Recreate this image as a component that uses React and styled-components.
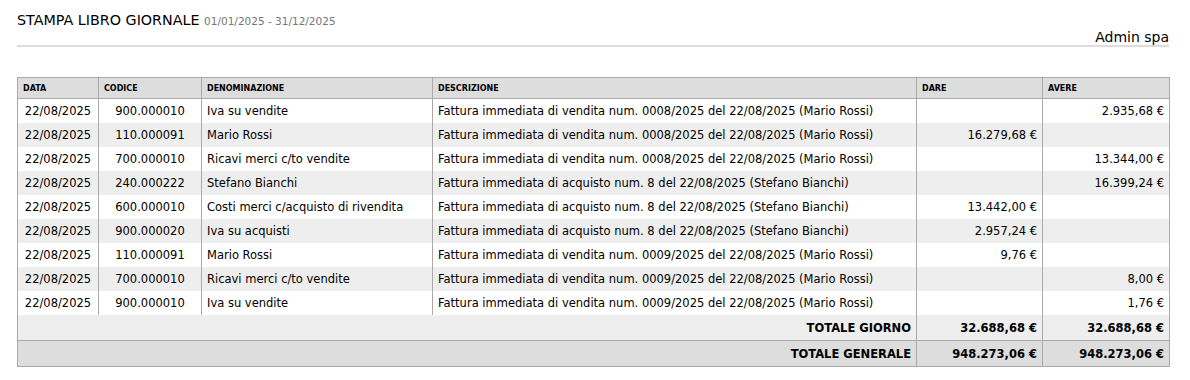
import React from 'react'
import styled, { createGlobalStyle } from 'styled-components'

const GlobalStyle = createGlobalStyle`
    body {
        margin: 0;
        background: #fff;
        font-family: "DejaVu Sans", sans-serif;
        color: #000;
    }
`

const Page = styled.div`
    padding: 11px 21px 0 17px;
`

const Header = styled.div`
    display: flex;
    justify-content: space-between;
    align-items: flex-end;
    border-bottom: 2px solid #ddd;
    margin-bottom: 30px;
`

const Title = styled.h1`
    margin: 0 0 15px 0;
    font-size: 14.3px;
    font-weight: normal;
    line-height: 18px;
    align-self: flex-start;
`

const Period = styled.small`
    font-size: 10.5px;
    color: #777;
`

const Company = styled.div`
    font-size: 14px;
    line-height: 16px;
`

const Table = styled.table`
    width: 100%;
    border-collapse: collapse;
    table-layout: fixed;
    border: 1px solid #aaa;
    font-size: 11.5px;
`

const Th = styled.th`
    background: #ddd;
    border: 1px solid #aaa;
    font-size: 8px;
    font-weight: bold;
    text-align: left;
    padding: 0 5px;
    height: 20px;
`

const Row = styled.tr`
    background: ${props => (props.striped ? '#eee' : '#fff')};
`

const Td = styled.td`
    border-left: 1px solid #aaa;
    border-right: 1px solid #aaa;
    padding: 0 5px;
    height: 24px;
    white-space: nowrap;
    text-align: ${props => props.align || 'left'};
`

const TotalRow = styled.tr`
    background: ${props => (props.grand ? '#ddd' : '#eee')};
    border-top: ${props => (props.grand ? '1px solid #aaa' : 'none')};
`

const TotalCell = styled.td`
    border-left: 1px solid #aaa;
    border-right: 1px solid #aaa;
    padding: 1px 5px 0 5px;
    height: 24px;
    font-weight: bold;
    text-align: right;
`

const rows = [
    ['22/08/2025', '900.000010', 'Iva su vendite', 'Fattura immediata di vendita num. 0008/2025 del 22/08/2025 (Mario Rossi)', '', '2.935,68 €'],
    ['22/08/2025', '110.000091', 'Mario Rossi', 'Fattura immediata di vendita num. 0008/2025 del 22/08/2025 (Mario Rossi)', '16.279,68 €', ''],
    ['22/08/2025', '700.000010', 'Ricavi merci c/to vendite', 'Fattura immediata di vendita num. 0008/2025 del 22/08/2025 (Mario Rossi)', '', '13.344,00 €'],
    ['22/08/2025', '240.000222', 'Stefano Bianchi', 'Fattura immediata di acquisto num. 8 del 22/08/2025 (Stefano Bianchi)', '', '16.399,24 €'],
    ['22/08/2025', '600.000010', 'Costi merci c/acquisto di rivendita', 'Fattura immediata di acquisto num. 8 del 22/08/2025 (Stefano Bianchi)', '13.442,00 €', ''],
    ['22/08/2025', '900.000020', 'Iva su acquisti', 'Fattura immediata di acquisto num. 8 del 22/08/2025 (Stefano Bianchi)', '2.957,24 €', ''],
    ['22/08/2025', '110.000091', 'Mario Rossi', 'Fattura immediata di vendita num. 0009/2025 del 22/08/2025 (Mario Rossi)', '9,76 €', ''],
    ['22/08/2025', '700.000010', 'Ricavi merci c/to vendite', 'Fattura immediata di vendita num. 0009/2025 del 22/08/2025 (Mario Rossi)', '', '8,00 €'],
    ['22/08/2025', '900.000010', 'Iva su vendite', 'Fattura immediata di vendita num. 0009/2025 del 22/08/2025 (Mario Rossi)', '', '1,76 €']
]

const widths = [81, 103, 231, 484, 126, 127]

export default function App() {
    return (
        <Page>
            <GlobalStyle />
            <Header>
                <Title>
                    STAMPA LIBRO GIORNALE <Period>01/01/2025 - 31/12/2025</Period>
                </Title>
                <Company>Admin spa</Company>
            </Header>
            <Table>
                <colgroup>
                    {widths.map((w, i) => <col key={i} style={{ width: w }} />)}
                </colgroup>
                <thead>
                    <tr>
                        <Th>DATA</Th>
                        <Th>CODICE</Th>
                        <Th>DENOMINAZIONE</Th>
                        <Th>DESCRIZIONE</Th>
                        <Th>DARE</Th>
                        <Th>AVERE</Th>
                    </tr>
                </thead>
                <tbody>
                    {rows.map((r, i) => (
                        <Row key={i} striped={i % 2 === 1}>
                            <Td align="center">{r[0]}</Td>
                            <Td align="center">{r[1]}</Td>
                            <Td>{r[2]}</Td>
                            <Td>{r[3]}</Td>
                            <Td align="right">{r[4]}</Td>
                            <Td align="right">{r[5]}</Td>
                        </Row>
                    ))}
                    <TotalRow>
                        <TotalCell colSpan={4}>TOTALE GIORNO</TotalCell>
                        <TotalCell>32.688,68 €</TotalCell>
                        <TotalCell>32.688,68 €</TotalCell>
                    </TotalRow>
                    <TotalRow grand>
                        <TotalCell colSpan={4}>TOTALE GENERALE</TotalCell>
                        <TotalCell>948.273,06 €</TotalCell>
                        <TotalCell>948.273,06 €</TotalCell>
                    </TotalRow>
                </tbody>
            </Table>
        </Page>
    )
}
